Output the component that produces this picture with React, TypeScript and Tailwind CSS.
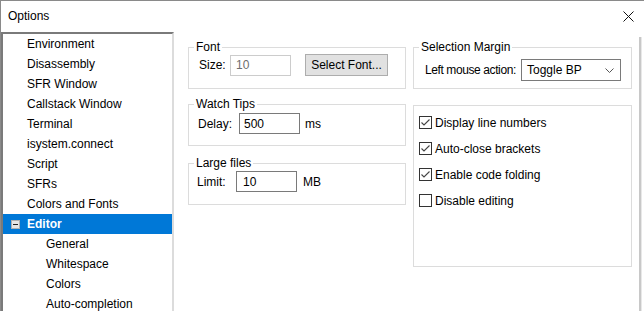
import React from 'react';

const tree = [
  { label: 'Environment', level: 0 },
  { label: 'Disassembly', level: 0 },
  { label: 'SFR Window', level: 0 },
  { label: 'Callstack Window', level: 0 },
  { label: 'Terminal', level: 0 },
  { label: 'isystem.connect', level: 0 },
  { label: 'Script', level: 0 },
  { label: 'SFRs', level: 0 },
  { label: 'Colors and Fonts', level: 0 },
  { label: 'Editor', level: 0, selected: true, expanded: true },
  { label: 'General', level: 1 },
  { label: 'Whitespace', level: 1 },
  { label: 'Colors', level: 1 },
  { label: 'Auto-completion', level: 1 },
];

const checks = [
  { label: 'Display line numbers', on: true },
  { label: 'Auto-close brackets', on: true },
  { label: 'Enable code folding', on: true },
  { label: 'Disable editing', on: false },
];

function GroupBox({ title, className, children }: { title?: string; className: string; children: React.ReactNode }) {
  return (
    <div className={`relative border border-[#dcdcdc] ${className}`}>
      {title && (
        <span className="absolute -top-[8px] left-[5px] bg-white px-[2px] leading-[14px]">{title}</span>
      )}
      {children}
    </div>
  );
}

function CheckBox({ on }: { on: boolean }) {
  return (
    <svg width="13" height="13" viewBox="0 0 13 13" className="shrink-0">
      <rect x="0.5" y="0.5" width="12" height="12" fill="white" stroke="#333" />
      {on && <polyline points="2.5,6.5 5,9 10.5,3.5" fill="none" stroke="#444" strokeWidth="1.1" />}
    </svg>
  );
}

export default function App() {
  return (
    <div className="w-[644px] h-[311px] overflow-hidden bg-white border-l border-t border-[#8a8a8a] flex flex-col font-['Liberation_Sans',Arial,sans-serif] text-[12px] leading-[14px] text-black">
      {/* Title bar */}
      <div className="h-[31px] shrink-0 flex items-center justify-between pl-[7px] pr-[9px] pb-px">
        <span>Options</span>
        <svg width="11" height="11" viewBox="0 0 11 11" className="mr-[1px]">
          <path d="M0.5 0.5 L10.5 10.5 M10.5 0.5 L0.5 10.5" stroke="#111" strokeWidth="1" />
        </svg>
      </div>

      <div className="flex flex-1 min-h-0">
        {/* Tree */}
        <div className="w-[173px] shrink-0 border-l-2 border-t-2 border-l-[#7a7a7a] border-t-[#7a7a7a] border-r-2 border-r-[#dcdcdc] flex flex-col">
          {tree.map((t) =>
            t.selected ? (
              <div key={t.label} className="h-5 shrink-0 flex items-center pl-[8px] bg-[#0078d7] text-white font-bold">
                <div className="w-[9px] h-[9px] border border-[#b0b0b0] bg-[#e6e6e6] flex items-center justify-center">
                  <div className="w-[5px] h-px bg-[#222]" />
                </div>
                <span className="ml-[7px]">{t.label}</span>
              </div>
            ) : (
              <div key={t.label} className={`h-5 shrink-0 flex items-center ${t.level ? 'pl-[43px]' : 'pl-[24px]'}`}>
                {t.label}
              </div>
            )
          )}
        </div>

        {/* Right area */}
        <div className="flex-1 flex pl-[14px] pt-[15px]">
          <div className="w-[218px] flex flex-col">
            <GroupBox title="Font" className="h-[42px] pt-[6px] pl-[10px]">
              <div className="flex items-center">
                <span className="w-[31px]">Size:</span>
                <div className="w-[61px] h-[21px] border border-[#cccccc] pl-[5px] flex items-center text-[#6d6d6d]">10</div>
                <div className="ml-[14px] w-[83px] h-[22px] border border-[#adadad] bg-[#e1e1e1] flex items-center justify-center">
                  Select Font...
                </div>
              </div>
            </GroupBox>
            <GroupBox title="Watch Tips" className="mt-[15px] h-[42px] pt-[8px] pl-[9px]">
              <div className="flex items-center">
                <span className="w-[41px]">Delay:</span>
                <div className="w-[61px] h-[21px] border border-[#7a7a7a] pl-[4px] flex items-center">500</div>
                <span className="ml-[5px]">ms</span>
              </div>
            </GroupBox>
            <GroupBox title="Large files" className="mt-[17px] h-[42px] pt-[7px] pl-[8px]">
              <div className="flex items-center">
                <span className="w-[39px]">Limit:</span>
                <div className="w-[61px] h-[21px] border border-[#7a7a7a] pl-[6px] flex items-center">10</div>
                <span className="ml-[6px]">MB</span>
              </div>
            </GroupBox>
          </div>

          <div className="ml-[7px] w-[219px] flex flex-col">
            <GroupBox title="Selection Margin" className="h-[42px] pt-[11px] pl-[11px] pr-[10px]">
              <div className="flex items-center justify-between">
                <span className="whitespace-nowrap tracking-[-0.4px]">Left mouse action:</span>
                <div className="w-[100px] h-[22px] shrink-0 border border-[#7a7a7a] pl-[5px] pr-[6px] flex items-center justify-between">
                  <span>Toggle BP</span>
                  <svg width="9" height="5" viewBox="0 0 9 5">
                    <polyline points="0.5,0.5 4.5,4.5 8.5,0.5" fill="none" stroke="#555" strokeWidth="1" />
                  </svg>
                </div>
              </div>
            </GroupBox>
            <GroupBox className="mt-[16px] h-[162px] pt-[10px] pl-[5px]">
              <div className="flex flex-col gap-[13px]">
                {checks.map((c) => (
                  <div key={c.label} className="flex items-center h-[13px]">
                    <CheckBox on={c.on} />
                    <span className="ml-[3px]">{c.label}</span>
                  </div>
                ))}
              </div>
            </GroupBox>
          </div>

          <div className="ml-[7px] mt-[-10px] w-[3px] h-[290px] border-l-2 border-[#c8c8c8] border-r border-r-[#e8e8e8]" />
        </div>
      </div>
    </div>
  );
}
